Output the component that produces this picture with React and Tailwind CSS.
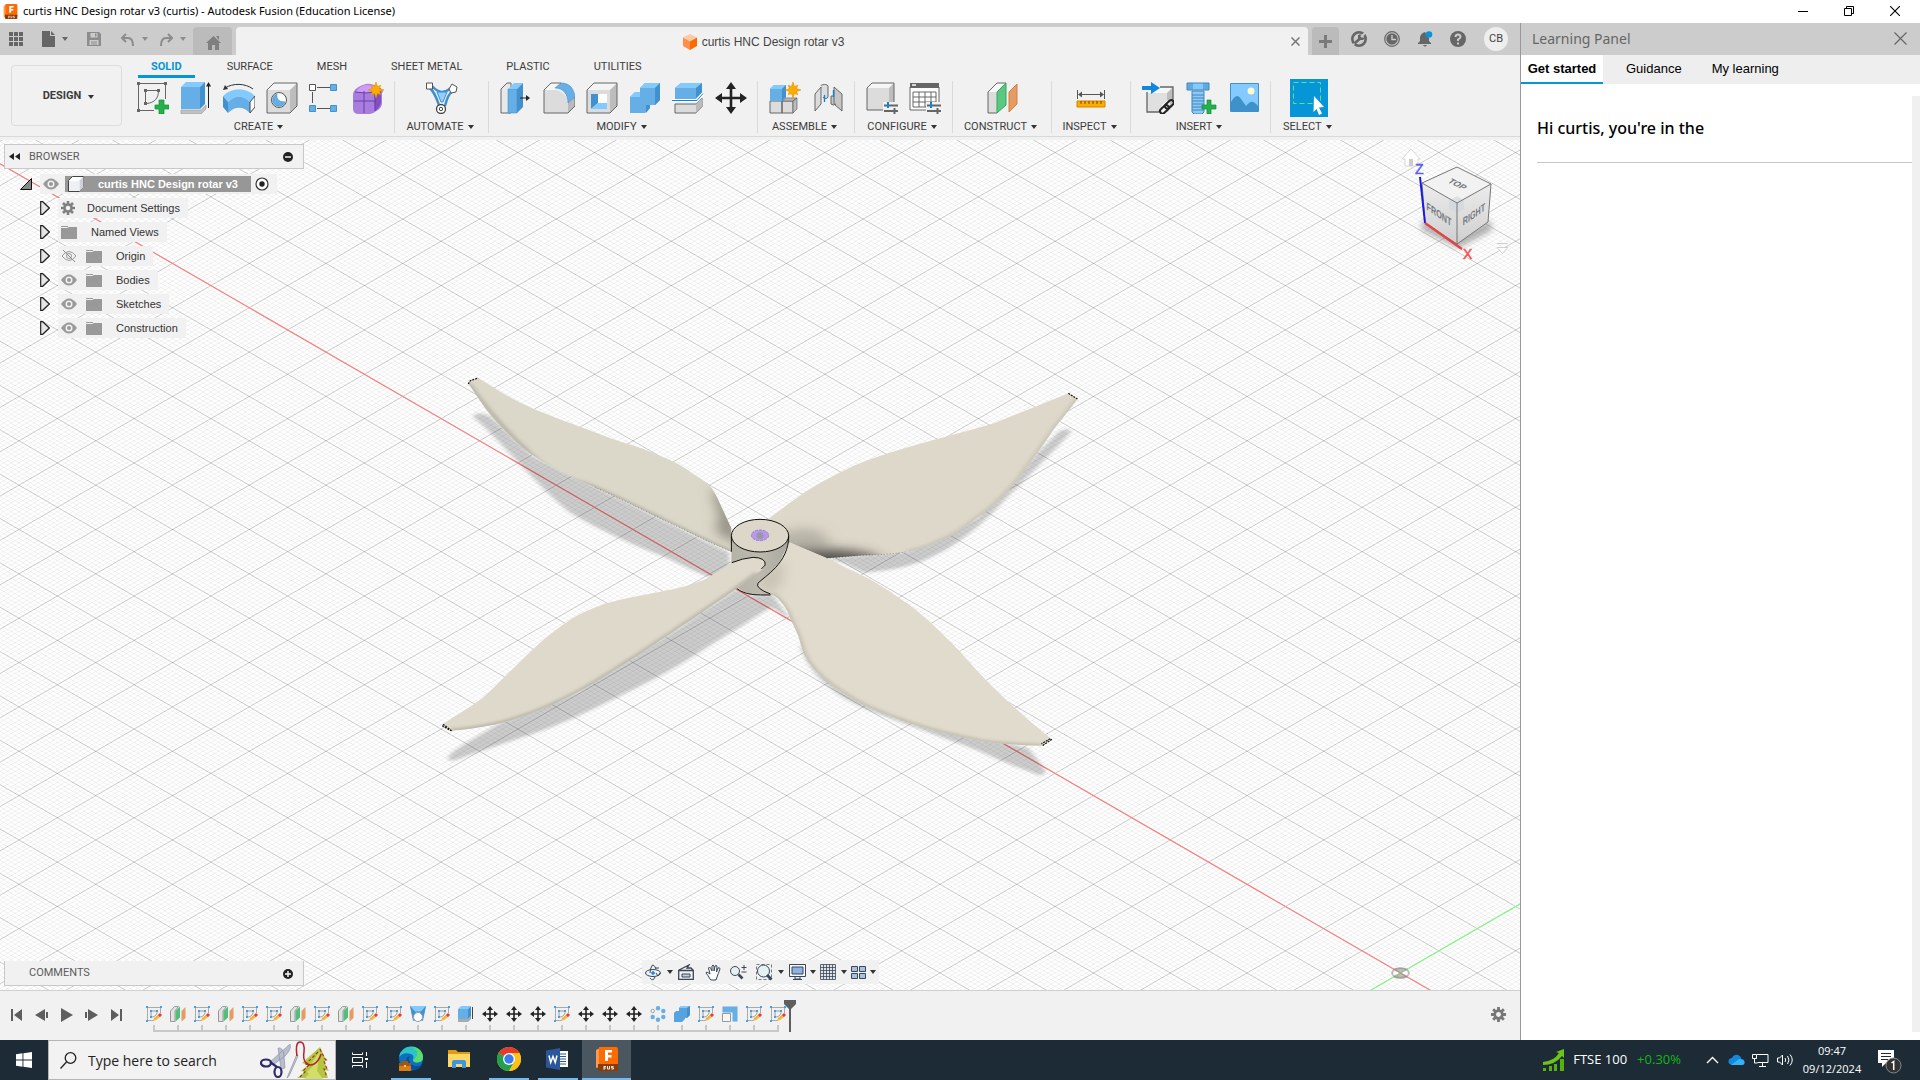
import React from "react";

/* ---------- small shared pieces ---------- */

const Caret = ({ className = "text-[#333]" }) => (
  <svg width="6" height="4" viewBox="0 0 6 4" className={className} aria-hidden="true">
    <path d="M0 0h6L3 4z" fill="currentColor" />
  </svg>
);

const Svg = ({ size = 32, box = 32, children }) => (
  <svg width={size} height={size} viewBox={`0 0 ${box} ${box}`} className="shrink-0" aria-hidden="true" fill="none">
    {children}
  </svg>
);

const B = "#66aee6";
const BL = "#82caff";
const BD = "#4391cc";
const G = "#666";
const burst = (x, y, r) => {
  const pts = [];
  for (let i = 0; i < 16; i++) {
    const a = (Math.PI * i) / 8;
    const q = i % 2 ? r * 0.48 : i % 4 ? r * 0.85 : r;
    pts.push(`${(x + q * Math.cos(a)).toFixed(2)},${(y + q * Math.sin(a)).toFixed(2)}`);
  }
  return pts.join(" ");
};

const ribbonIcons = {
  sketch: (
    <>
      <path d="M3 1.500h24M1.500 3v24M28.500 3v14M3 28.500h14M8.500 9v13M9 8.500h12M21.500 9c0 7-4 12-12 12.500" stroke={G} />
      <path d="M0 0h3v3H0zM27 0h3v3h-3zM0 27h3v3H0zM7 7h3v3H7zM20 7h3v3h-3zM7 20h3v3H7z" fill={G} />
      <path d="M22 18h5v5h5v4h-5v5h-5v-5h-4v-4h4z" fill="#22b14c" stroke="#178a38" strokeWidth=".7" />
    </>
  ),
  extrude: (
    <>
      <path d="M1 28h20l5-5v4l-5 5H1z" fill="#c2c2c2" stroke="#999" strokeWidth=".6" />
      <path d="M1 5v22h19V5z" fill={B} />
      <path d="M1 5l5-5h19l-5 5z" fill={BL} />
      <path d="M20 5l5-5v22l-5 5z" fill={BD} />
      <path d="M28.500 3v23" stroke="#222" />
      <path d="M28.500 0l2.500 4.500h-5z" fill="#222" />
    </>
  ),
  revolve: (
    <>
      <path d="M2 6c8-5 20-5 28 1" stroke="#333" />
      <path d="M0 8l2-5 3 4z" fill="#333" />
      <path d="M0 14C9 5 23 5 32 14l-5 6C20 13 12 13 5 20z" fill={BL} />
      <path d="M0 14l5 6v11l-5-6z" fill={BD} />
      <path d="M5 20c7-7 15-7 22 0v11c-7-7-15-7-22 0z" fill={B} />
      <path d="M27 20l5-6v11l-5 6z" fill="#fff" stroke="#444" />
    </>
  ),
  hole: (
    <>
      <path d="M1 8l7-7h23v23l-7 7" fill="#bdbdbd" />
      <path d="M1 8l7-7h23l-7 7z" fill="#f4f4f4" />
      <path d="M1 8h23v23H1z" fill="#dcdcdc" />
      <path d="M1 8l7-7h23v23l-7 7H1z" stroke={G} />
      <circle cx="13" cy="18" r="7.500" fill="#fff" stroke="#555" />
      <path d="M11 12a6.300 6.300 0 1 0 8 8C13 20 10 17 11 12z" fill={B} stroke={BD} strokeWidth=".7" />
    </>
  ),
  pattern: (
    <>
      <path d="M8 5.500h13M3.500 10v11M8 26.500h13" stroke="#555" />
      <path d="M.5 2.500h6v6h-6z" fill="#fff" stroke="#555" />
      <path d="M21.500 2.500h6v6h-6zM.5 23.500h6v6h-6zM21.500 23.500h6v6h-6z" fill={B} stroke={BD} />
    </>
  ),
  form: (
    <>
      <path d="M1 13Q1 9 5 6t9-4 12 3 4 6v10q0 4-4 7t-8 4H7q-6 0-6-5z" fill="#a77ee0" />
      <path d="M4 10Q8 3 15 3q9 0 12 3-6 5-10 5z" fill="#cf9cf5" />
      <path d="M22 10q6-4 7-4v15q-2 6-6 8z" fill="#8250bd" />
      <path d="M2 19h22M12 9v22M3 10q10 2 20 0v19" stroke="#6b3fa8" />
      <polygon points={burst(24, 8, 8)} fill="#ffab00" stroke="#d98b00" strokeWidth=".5" />
    </>
  ),
  automate: (
    <>
      <path d="M4 6c5 5 6 9 9 17M28 8c-6 4-7 9-9 16M6 4c7 8 13 7 19 2" stroke="#3f8ed0" strokeWidth="2.500" />
      <path d="M11 10h10l-4 10h-2z" fill="#8fd0ff" stroke="#3f8ed0" />
      <path d="M.5 1h6v6h-6z" fill="#fff" stroke="#555" />
      <path d="M23 7l3-5 5 3-1 5-5 1z" fill="#fff" stroke="#555" />
      <circle cx="15" cy="27" r="4.500" fill="#fff" stroke="#444" strokeWidth="1.300" />
      <circle cx="15" cy="27" r="1.700" stroke="#444" />
    </>
  ),
  presspull: (
    <>
      <path d="M1 7l6-6h4v30H1z" fill="#e8e8e8" stroke={G} />
      <path d="M8 7v24h9V7z" fill={B} stroke={BD} strokeWidth=".6" />
      <path d="M8 7l6-6h9l-6 6z" fill={BL} />
      <path d="M17 7l6-6v24l-6 6z" fill={BD} />
      <path d="M20 16h8" stroke="#222" />
      <path d="M26 13l4 3-4 3z" fill="#222" />
    </>
  ),
  fillet: (
    <>
      <path d="M1 8l7-7h12L12 8z" fill="#f6f6f6" />
      <path d="M1 8h10c9 0 14 7 14 15v8H1z" fill="#dcdcdc" />
      <path d="M25 21l7-6v9l-7 7z" fill="#bbb" />
      <path d="M12 6l6-5c9 0 13 6 14 14l-7 6C25 12 20 6 12 6z" fill={B} stroke={BD} strokeWidth=".6" />
      <path d="M18 1H8L1 8v23h24l7-7v-9" stroke={G} />
    </>
  ),
  shell: (
    <>
      <path d="M1 8l7-7h23v23l-7 7" fill="#bdbdbd" />
      <path d="M1 8l7-7h23l-7 7z" fill="#f4f4f4" />
      <path d="M1 8h23v23H1z" fill="#dcdcdc" />
      <path d="M1 8l7-7h23v23l-7 7H1z" stroke={G} />
      <path d="M5 12h16v15H5z" fill="#fff" />
      <path d="M5 12h7v9l-7 6z" fill={BD} />
      <path d="M5 27l7-6h9v6z" fill={BL} />
    </>
  ),
  combine: (
    <>
      <path d="M1 15l5-5h5V6l5-5h15v17l-5 5h-5v3l-5 5H1z" fill={B} />
      <path d="M11 6l5-5h15l-5 5zM1 15l5-5h5v5z" fill={BL} />
      <path d="M26 6l5-5v17l-5 5zM17 23h4v3l-4 5z" fill={BD} />
    </>
  ),
  split: (
    <>
      <path d="M3 6l6-5h21v10l-6 6H3z" fill={B} />
      <path d="M3 6l6-5h21l-6 5z" fill={BL} />
      <path d="M24 6l6-5v10l-6 5z" fill={BD} />
      <path d="M3 22h21l6-6v9l-6 6H3z" fill="#dcdcdc" stroke={G} />
      <path d="M24 22l6-6v9l-6 6z" fill="#bbb" />
      <path d="M0 18.500h25l6-7" stroke="#fff" strokeWidth="3" />
      <path d="M0 18.500h25l6-7" stroke="#0a84e0" />
    </>
  ),
  move: (
    <>
      <path d="M16 5v22M5 16h22" stroke="#222" strokeWidth="2.600" />
      <path d="M16 0l5 7H11zM16 32l5-7H11zM0 16l7-5v10zM32 16l-7-5v10z" fill="#222" />
    </>
  ),
  component: (
    <>
      <path d="M1 19h12v12H1zM13 19h11v12H13z" fill="#dcdcdc" stroke={G} />
      <path d="M13 19l4-3h11l-4 3zM24 19l4-3v11l-4 4z" fill="#bbb" stroke={G} strokeWidth=".7" />
      <path d="M1 7l4-4h12v12l-4 4H1z" fill={B} />
      <path d="M1 7l4-4h12l-4 4z" fill={BL} />
      <path d="M13 7l4-4v12l-4 4z" fill={BD} />
      <polygon points={burst(24, 8, 8)} fill="#ffab00" stroke="#d98b00" strokeWidth=".5" />
    </>
  ),
  joint: (
    <>
      <path d="M3 12l6-7v17l-6 7zM9 4c0-2 7-2 7 0v11c0 2-5 2-5 0" fill="#dcdcdc" stroke={G} />
      <path d="M30 12l-8-7v17l8 7zM22 14h-3v8q2 2 5 0" fill="#c6c6c6" stroke={G} />
      <path d="M12.500 13v7M21.500 8v7" stroke="#0a84e0" strokeWidth="1.400" />
    </>
  ),
  configure: (
    <>
      <path d="M1 6l5-5h22v22l-5 5" fill="#bdbdbd" />
      <path d="M1 6h22v22H1z" fill="#dcdcdc" />
      <path d="M1 6l5-5h22l-5 5z" fill="#f6f6f6" />
      <path d="M28 20V1H6L1 6v22h17" stroke={G} />
      <path d="M17 20h15v12H17z" fill="#f1f1f1" />
      <path d="M18 23.500h14M18 29h14" stroke={G} strokeWidth="2" />
      <path d="M22 20v6" stroke="#0a84e0" strokeWidth="2" />
      <path d="M28.500 26v6" stroke={G} strokeWidth="2" />
    </>
  ),
  table: (
    <>
      <path d="M1 5h29v23H1z" fill="#fff" stroke={G} />
      <path d="M1 1h29v5H1z" fill="#666" />
      <path d="M3 3h4" stroke="#fff" strokeWidth="1.500" />
      <path d="M4 10h23v15H4zM4 15h23M4 20h23M10 10v15M16 10v15M22 10v15" stroke={G} />
      <path d="M17 20h15v12H17z" fill="#f1f1f1" />
      <path d="M18 23.500h14M18 29h14" stroke={G} strokeWidth="2" />
      <path d="M22 20v6" stroke="#0a84e0" strokeWidth="2" />
      <path d="M28.500 26v6" stroke={G} strokeWidth="2" />
    </>
  ),
  plane: (
    <>
      <path d="M2 10l9-9h9l-9 9v21H2z" fill="#dcdcdc" />
      <path d="M2 10l9-9h9l-9 9z" fill="#f8f8f8" />
      <path d="M20 1h-9L2 10v21h9" stroke={G} />
      <path d="M11 10l9-9v22l-9 8z" fill="#5bc882" stroke="#2fa85c" />
      <path d="M23 10l8-8v20l-8 8z" fill="#e69a64" stroke="#d07f45" />
    </>
  ),
  measure: (
    <>
      <path d="M2.500 8v9M29.500 8v9M4 12.500h24" stroke="#555" />
      <path d="M3 12.500l4-3v6zM29 12.500l-4-3v6z" fill="#555" />
      <path d="M2 19h28v6H2z" fill="#ffab00" stroke="#cf8600" />
      <path d="M6 19v3M10 19v3M14 19v3M18 19v3M22 19v3M26 19v3" stroke="#6b4a00" />
    </>
  ),
  insert: (
    <>
      <path d="M5 11l5-6h21v19l-6 6" fill="#bdbdbd" />
      <path d="M5 11h20v19H5z" fill="#e0e0e0" />
      <path d="M5 11l5-6h21l-6 6z" fill="#f6f6f6" />
      <path d="M18 5h13v13M5 10v20h12" stroke={G} strokeWidth="1.300" />
      <path d="M0 4h9V0l9 6-9 6V8H0z" fill="#1187e0" />
      <g stroke="#f1f1f1" strokeWidth="5"><path d="M21 25l6-5M20 29l6-5" /></g>
      <g stroke="#222" strokeWidth="2">
        <rect x="22" y="20" width="10" height="5" rx="2.500" transform="rotate(-42 27 22)" />
        <rect x="17" y="25" width="10" height="5" rx="2.500" transform="rotate(-42 22 27)" />
      </g>
    </>
  ),
  fastener: (
    <>
      <path d="M2 1h22v7H2z" fill="#64a9dc" />
      <path d="M8 1h10v7H8z" fill="#82caff" />
      <path d="M2 1h22v7H2z" stroke="#3f86bf" />
      <path d="M7 9h12v21l-2 2H9l-2-2z" fill="#8cc8f2" stroke="#3f86bf" />
      <path d="M7 13h12M7 16h12M7 19h12M7 22h12M7 25h12M7 28h12" stroke="#3f86bf" />
      <path d="M22 18h4v5h5v4h-5v5h-4v-5h-5v-4h5z" fill="#22b14c" stroke="#178a38" strokeWidth=".7" />
    </>
  ),
  canvas: (
    <>
      <path d="M2.500 1.500h28v28h-28z" fill="#82caff" stroke={BD} />
      <circle cx="23" cy="9" r="3.500" fill="#fff8c8" />
      <path d="M3 20c4-7 7-8 10-3l5 7c4-4 6-7 12 0v5H3z" fill="#3f91ca" />
    </>
  ),
};

const small = {
  sketch: (
    <>
      <path d="M1.500 15V1.500H15M14.500 1v6M1 14.500h7" stroke="#aaa" />
      <path d="M5 11V5h6M11 5c0 4-2 6-6 6" stroke="#999" />
      <path d="M0 0h2v2H0zM14 0h2v2h-2zM0 14h2v2H0zM4 4h2v2H4zM10 4h2v2h-2zM4 10h2v2H4z" fill="#3fa2ea" />
      <path d="M7 15l1-3 5-4 2 2-5 4z" fill="#f3b53c" />
      <path d="M12 9l2-2 2 2-2 2z" fill="#e83b3b" />
    </>
  ),
  plane: (
    <>
      <path d="M.5 5l4-4.500h4L5 5v10.500H.5z" fill="#e2e2e2" stroke="#999" />
      <path d="M5.500 5L10 .5v11l-4.500 4z" fill="#4fc07b" />
      <path d="M11.500 5l4-4v11l-4 3.500z" fill="#e69a64" />
    </>
  ),
  loft: (
    <>
      <path d="M0 0h16l-3 15H3z" fill={B} />
      <path d="M0 0h16l-5 5H5z" fill={BL} />
      <path d="M0 0l3 13 3-6zM16 0l-3 13-3-6z" fill={BD} />
      <circle cx="8" cy="11" r="4.500" fill="#fff" stroke="#999" />
    </>
  ),
  extrude: (
    <>
      <path d="M0 13h10l3-3v3l-3 3H0z" fill="#aaa" />
      <path d="M0 3h10v10H0z" fill={B} />
      <path d="M0 3l3-3h10l-3 3z" fill={BL} />
      <path d="M10 3l3-3v10l-3 3z" fill={BD} />
      <path d="M14.500 1v12" stroke="#444" />
    </>
  ),
  move: (
    <>
      <path d="M8 2v12M2 8h12" stroke="#222" strokeWidth="1.600" />
      <path d="M8 0l3 4H5zM8 16l3-4H5zM0 8l4-3v6zM16 8l-4-3v6z" fill="#222" />
    </>
  ),
  circular: (
    <>
      <circle cx="8" cy="2.200" r="2.200" fill={B} />
      <circle cx="13.300" cy="5" r="2.200" fill={B} />
      <circle cx="13.300" cy="11" r="2.200" fill={B} />
      <circle cx="8" cy="13.800" r="2.200" fill={B} />
      <circle cx="2.700" cy="11" r="2.200" fill={B} />
      <circle cx="2.700" cy="5" r="1.700" fill="#fff" stroke="#999" />
    </>
  ),
  combine: (
    <>
      <path d="M0 7l2-2h3V2l2-2h9v9l-3 3h-2v1l-3 3H0z" fill="#56a3df" />
      <path d="M5 2l2-2h9l-3 2z" fill={BL} />
      <path d="M13 2l3-2v9l-3 3z" fill={BD} />
    </>
  ),
  scale: (
    <>
      <path d="M.5.500h15v15h-5v-9h-10z" fill={B} />
      <path d="M.5 7.500h8v8h-8z" fill="#f6f6f6" stroke="#999" />
    </>
  ),
};

/* ---------- title bar ---------- */

const FusionLogo = ({ size }) => (
  <svg width={size} height={size} viewBox="0 0 24 24" aria-hidden="true">
    <path d="M1 3l4-2v18l-3 2q-1 0-1-1z" fill="#ff9a55" />
    <path d="M4 0h17q2 0 2 2v17H4z" fill="#ff6b00" />
    <path d="M3 17h20v5q0 2-2 2H5q-2 0-2-2z" fill="#8c3a06" />
    <path d="M10 3h7v2.500h-4V8h3.500v2.500H13V14h-3z" fill="#fff" />
    <path d="M9 19v4M9 19.500h2M9 21h2M12.500 19v3h2v-3M18.500 19.500h-2v1.300h2V22h-2" stroke="#fff" strokeWidth=".9" fill="none" />
  </svg>
);

function TitleBar() {
  return (
    <header className="flex h-[23px] shrink-0 items-center bg-white pl-[3px]">
      <FusionLogo size={15} />
      <h1 className="ml-[5px] flex-1 font-['Noto_Sans',sans-serif] text-[11px] text-black">
        curtis HNC Design rotar v3 (curtis) - Autodesk Fusion (Education License)
      </h1>
      <div className="flex h-full pr-[2px] text-black">
        <button aria-label="Minimise" className="flex w-[46px] items-center justify-center">
          <svg width="10" height="10" viewBox="0 0 10 10"><path d="M0 4.500h10" stroke="currentColor" /></svg>
        </button>
        <button aria-label="Restore" className="flex w-[46px] items-center justify-center pb-[2px]">
          <svg width="10" height="10" viewBox="0 0 10 10" fill="none"><path d="M.5 2.500h7v7h-7zM2.500 2.500v-2h7v7h-2" stroke="currentColor" /></svg>
        </button>
        <button aria-label="Close" className="flex w-[46px] items-center justify-center pb-[2px]">
          <svg width="10" height="10" viewBox="0 0 10 10"><path d="M0 0l10 10M10 0L0 10" stroke="currentColor" strokeWidth="1.100" /></svg>
        </button>
      </div>
    </header>
  );
}

/* ---------- quick access bar ---------- */

function QuickBar() {
  return (
    <div className="flex h-8 items-end bg-[#cccccc] text-[#666]">
      <div className="flex h-8 w-[193px] items-center pl-[9px]">
        <button aria-label="Data panel" className="w-[33px]">
          <svg width="14" height="14" viewBox="0 0 14 14" fill="currentColor">
            {[0, 5, 10].map((y) => [0, 5, 10].map((x) => <rect key={`${x}-${y}`} x={x} y={y} width="4" height="4" />))}
          </svg>
        </button>
        <button aria-label="File" className="flex w-[45px] items-center gap-[6px]">
          <svg width="14" height="16" viewBox="0 0 14 16" fill="currentColor"><path d="M0 0h8v5h5v11H0zM9 0l4 4H9z" /></svg>
          <Caret className="text-[#666]" />
        </button>
        <button aria-label="Save" className="w-[34px] text-[#8c8c8c]">
          <svg width="14" height="14" viewBox="0 0 14 14"><path d="M0 0h12l2 2v12H0z" fill="currentColor" /><path d="M3.500 1h7v4.500h-7zM2.500 8h9v5h-9z" fill="#ccc" /><path d="M8 1.500h1.500v3H8zM4 9.500h6v1H4zM4 11.500h6v1H4z" fill="currentColor" /></svg>
        </button>
        <button aria-label="Undo" className="flex w-[39px] items-center gap-2 text-[#8c8c8c]">
          <svg width="13" height="13" viewBox="0 0 13 13" fill="none" stroke="currentColor" strokeWidth="2"><path d="M5 1L1 5l4 4M1.500 5H7q5 0 5 8" /></svg>
          <Caret className="text-[#8c8c8c]" />
        </button>
        <button aria-label="Redo" className="flex items-center gap-[7px] text-[#8c8c8c]">
          <svg width="13" height="13" viewBox="0 0 13 13" fill="none" stroke="currentColor" strokeWidth="2"><path d="M8 1l4 4-4 4M11.500 5H6Q1 5 1 13" /></svg>
          <Caret className="text-[#8c8c8c]" />
        </button>
      </div>
      <button aria-label="Home" className="flex h-7 w-[39px] items-center justify-center rounded-t bg-[#bbbbbb] pt-1 pl-[2px] text-[#7f7f7f]">
        <svg width="15" height="14" viewBox="0 0 15 14" fill="currentColor"><path d="M7.500 0L15 7h-2v7H9V9H6v5H2V7H0zM10 0h3v4z" /></svg>
      </button>
      <div className="ml-1 flex h-7 flex-1 items-center rounded-t bg-[#f1f1f1] pr-2 font-['Liberation_Sans',sans-serif] text-xs text-[#444]">
        <div className="flex flex-1 items-center justify-center gap-[5px] pt-[2px]">
          <svg width="14" height="16" viewBox="0 0 14 16"><path d="M7 0l7 3.500L7 7.500 0 3.500z" fill="#ffc9a3" /><path d="M0 3.500l7 4V16l-7-4z" fill="#ff8f45" /><path d="M14 3.500l-7 4V16l7-4z" fill="#fb6a00" /></svg>
          <span>curtis HNC Design rotar v3</span>
        </div>
        <button aria-label="Close document" className="text-[#777]">
          <svg width="9" height="9" viewBox="0 0 9 9"><path d="M.5.500l8 8M8.500.500l-8 8" stroke="currentColor" strokeWidth="1.500" /></svg>
        </button>
      </div>
      <button aria-label="New tab" className="ml-1 flex h-7 w-[27px] items-center justify-center rounded-t bg-[#bbbbbb] text-[#7a7a7a]">
        <svg width="13" height="13" viewBox="0 0 13 13"><path d="M6.500 0v13M0 6.500h13" stroke="currentColor" strokeWidth="3" /></svg>
      </button>
      <div className="flex h-8 items-center gap-[17px] pr-3 pl-3">
        <button aria-label="Extensions">
          <svg width="16" height="16" viewBox="0 0 16 16" fill="none"><circle cx="8" cy="8" r="6.700" stroke="currentColor" strokeWidth="2.600" /><path d="M2 14L8 8" stroke="#ccc" strokeWidth="1.500" /><path d="M3.500 12.500L9 7.500" stroke="currentColor" strokeWidth="2.600" /><path d="M7 4v3q0 2 2 2h3l2-2-2.500-.5L10 5l-.5-2z" fill="currentColor" /><path d="M10 6l4-4" stroke="#ccc" strokeWidth="1.800" /></svg>
        </button>
        <button aria-label="Job status">
          <svg width="16" height="16" viewBox="0 0 16 16" fill="none"><circle cx="8" cy="8" r="7.300" stroke="currentColor" strokeWidth="1.200" /><circle cx="8" cy="8" r="5.700" fill="currentColor" /><path d="M8 4v4.500h4" stroke="#ccc" strokeWidth="1.400" /></svg>
        </button>
        <button aria-label="Notifications">
          <svg width="16" height="16" viewBox="0 0 16 16"><path d="M1 12l2-2V6q1-4 5-5l4 6v3l2 2v1H1zM6 14h4q-2 3-4 0z" fill="currentColor" /><circle cx="12" cy="3.500" r="3.300" fill="#0696d7" /></svg>
        </button>
        <button aria-label="Help">
          <svg width="16" height="16" viewBox="0 0 16 16"><circle cx="8" cy="8" r="8" fill="currentColor" /><path d="M5.500 6Q5.500 3.500 8 3.500T10.500 6Q10.500 7 8 8.500V10M8 11.500v2" stroke="#ccc" fill="none" strokeWidth="2" /></svg>
        </button>
        <button className="ml-[1px] flex size-6 items-center justify-center rounded-full bg-[#eeeeee] font-['Roboto',sans-serif] text-[11px] text-[#444]">CB</button>
      </div>
    </div>
  );
}

/* ---------- ribbon ---------- */

const groups = [
  { label: "CREATE", icons: ["sketch", "extrude", "revolve", "hole", "pattern", "form"], w: "w-[269px]" },
  { label: "AUTOMATE", icons: ["automate"], w: "w-[94px]" },
  { label: "MODIFY", icons: ["presspull", "fillet", "shell", "combine", "split", "move"], w: "w-[269px]" },
  { label: "ASSEMBLE", icons: ["component", "joint"], w: "w-[97px]" },
  { label: "CONFIGURE", icons: ["configure", "table"], w: "w-[98px]" },
  { label: "CONSTRUCT", icons: ["plane"], w: "w-[99px]" },
  { label: "INSPECT", icons: ["measure"], w: "w-[79px]" },
  { label: "INSERT", icons: ["insert", "fastener", "canvas"], w: "w-[140px]" },
];

const GroupLabel = ({ children }) => (
  <button className="flex h-3 items-center gap-1 whitespace-nowrap pr-[3px] leading-3">
    {children}
    <Caret />
  </button>
);

function Ribbon() {
  return (
    <div className="flex h-[85px] shrink-0 border-b-[3px] border-[#f1f1f1] bg-[#f1f1f1] font-['Roboto',sans-serif] text-[11px] text-[#3c3c3c]">
      <div className="flex flex-1 border-b border-[#d9d9d9] pb-[2px]">
        <button className="mt-[10px] ml-[11px] flex h-[61px] w-[111px] shrink-0 items-center justify-center gap-[7px] rounded border border-[#dcdcdc] pt-[2px] pl-1 font-bold">
          DESIGN
          <Caret />
        </button>
        <div className="ml-1 flex flex-1 flex-col">
          <nav className="ml-3 flex h-[23px] gap-5">
            {["SOLID", "SURFACE", "MESH", "SHEET METAL", "PLASTIC", "UTILITIES"].map((t, i) => (
              <button
                key={t}
                className={
                  i === 0
                    ? "border-b-[3px] border-[#0696d7] px-[13px] pt-1 font-bold text-[#0696d7]"
                    : "border-b-[3px] border-transparent px-3 pt-1"
                }
              >
                {t}
              </button>
            ))}
          </nav>
          <div className="mt-[3px] flex">
            {groups.map((g) => (
              <div key={g.label} className={`${g.w} flex h-[52px] shrink-0 flex-col items-center justify-between border-r border-[#dadada]`}>
                <div className="mt-[1px] flex gap-[11px]">
                  {g.icons.map((n) => (
                    <button key={n} aria-label={n}>
                      <Svg>{ribbonIcons[n]}</Svg>
                    </button>
                  ))}
                </div>
                <GroupLabel>{g.label}</GroupLabel>
              </div>
            ))}
            <div className="ml-3 flex h-[52px] flex-col items-center justify-between">
              <button aria-label="Select" className="-mt-[2px] bg-[#0696d7]">
                <svg width="38" height="38" viewBox="0 0 38 38" fill="none">
                  <path d="M3.500 3.500h27v21h-27z" stroke="#5fe08a" strokeDasharray="5 3" />
                  <path d="M24 17l10 11-5 .5 3 6-3 1.500-2.500-6-3 3z" fill="#fff" />
                </svg>
              </button>
              <GroupLabel>SELECT</GroupLabel>
            </div>
          </div>
        </div>
      </div>
    </div>
  );
}

/* ---------- modelling canvas ---------- */

const CX = 1400.5;
const CY = 833;
const STEP = 44.35;
const SLOPE = 44.35 / 76.75;

function gridPath(step, skipMajor) {
  let d = "";
  const W = 2600;
  const n = Math.ceil(2600 / step);
  for (let k = -n; k <= n; k++) {
    if (skipMajor && k % 10 === 0) continue;
    const y = CY + k * step;
    d += `M0 ${(y - SLOPE * CX).toFixed(2)}L${W} ${(y + SLOPE * (W - CX)).toFixed(2)}`;
    d += `M0 ${(y + SLOPE * CX).toFixed(2)}L${W} ${(y - SLOPE * (W - CX)).toFixed(2)}`;
  }
  return d;
}
const MAJOR = gridPath(STEP, false);
const MINOR = gridPath(STEP / 10, true);

const blades = {
  nw: "M88 100L93 92 111 84C150 115 190 150 240 177C310 215 360 235 410 262C450 280 485 292 520 312C555 330 580 345 600 365C625 385 642 400 650 415C660 435 665 450 670 465L695 535V605C640 575 600 548 550 517C490 480 430 440 380 412C320 378 270 345 230 310C190 270 155 220 130 180Z",
  ne: "M780 508C800 487 825 462 850 440C872 420 895 402 920 385C945 367 970 350 1000 335C1040 315 1080 300 1120 285C1180 262 1240 245 1300 220L1472 130 1493 147C1475 180 1458 205 1440 235C1420 275 1400 310 1380 345C1360 385 1340 415 1320 440C1300 467 1280 488 1260 505C1235 532 1210 555 1180 570C1155 587 1130 600 1100 605C1065 613 1035 614 1000 616L915 625 828 577Z",
  se: "M828 577L920 627C950 648 985 668 1010 685C1045 710 1070 733 1100 760C1130 788 1155 818 1180 850C1210 888 1235 922 1260 960C1310 1030 1370 1100 1434 1168L1412 1187C1370 1186 1325 1183 1280 1175C1225 1162 1170 1145 1120 1125C1078 1107 1035 1085 1000 1065C970 1045 945 1022 920 1000C900 978 882 955 870 930C860 908 855 885 850 860C844 840 838 825 832 810C828 792 822 778 815 765C806 748 797 738 785 732C765 722 752 715 756 703C765 690 790 665 808 630Z",
  sw: "M696 638C715 628 730 623 745 622C765 622 775 634 773 645Q772 654 755 670L705 717C655 765 605 805 560 847C525 875 495 905 460 932C420 965 380 1000 340 1027C295 1058 250 1085 200 1105C155 1125 100 1137 50 1142L30 1123C60 1095 92 1073 120 1045C148 1015 172 978 200 945C228 910 252 878 280 850C303 828 325 805 350 790C373 774 395 764 420 755C460 742 505 732 550 720C585 712 620 697 640 684Z",
};

const shadows = [
  "M100 200C105 185 120 188 140 200L240 320 690 608V690C640 690 600 655 540 620C460 580 390 540 320 485C240 400 170 280 100 200Z",
  "M42 1225C45 1205 90 1175 160 1120L340 1025 560 845 705 717 790 770C760 790 720 830 690 850C640 890 580 945 520 985C450 1030 400 1065 320 1110C240 1155 140 1190 60 1230Q40 1235 42 1225Z",
  "M955 640L915 625 1100 605 1260 505 1400 310 1450 245Q1477 230 1478 246C1440 300 1390 365 1340 430C1290 500 1230 580 1150 625C1100 655 1040 665 1000 668Z",
  "M850 880C880 990 940 1040 1010 1080C1090 1120 1180 1160 1270 1205C1320 1235 1370 1260 1405 1276Q1425 1275 1416 1255L1380 1195 1120 1120 950 1020Z",
  "M705 717L735 737 790 735 835 815C815 800 800 775 780 770Z",
];

function Scene() {
  return (
    <svg className="absolute inset-0 h-full w-full" aria-label="Model view" role="img">
      <defs>
        <filter id="soft" x="-10%" y="-10%" width="120%" height="120%"><feGaussianBlur stdDeviation="5" /></filter>
        <filter id="shade" x="-60%" y="-60%" width="220%" height="220%"><feGaussianBlur stdDeviation="16" /></filter>
        {Object.entries(blades).map(([k, d]) => (
          <clipPath key={k} id={`clip-${k}`}><path d={d} /></clipPath>
        ))}
        <linearGradient id="hub" x1="0" x2="1"><stop offset="0" stopColor="#b5b2a7" /><stop offset=".5" stopColor="#bdb9ae" /><stop offset="1" stopColor="#a9a69b" /></linearGradient>
      </defs>
      <rect width="100%" height="100%" fill="#ffffff" />
      <path d={MINOR} stroke="#000" strokeOpacity=".055" strokeWidth="1" />
      <path d={MAJOR} stroke="#000" strokeOpacity=".2" strokeWidth="1" />
      <path d={`M0 ${CY - SLOPE * CX}L2600 ${CY + SLOPE * (2600 - CX)}`} stroke="#ff7f7f" strokeWidth="1.200" />
      <path d={`M${CX - 400} ${CY + SLOPE * 400}L2600 ${CY - SLOPE * (2600 - CX)}`} stroke="#86f786" strokeWidth="1.200" />
      <g fill="#8a8a8a" fillOpacity=".55">
        <ellipse cx="1400.500" cy="833" rx="8.500" ry="4.800" fill="none" stroke="#8a8a8a" strokeOpacity=".55" strokeWidth="1.800" />
        <path d="M1393 829q7-3 15 0l-7 4 7 4q-7 3-15 0l7-4z" />
      </g>
      <g transform="translate(430 210) scale(.43367 .33333)">
        <g fill="#000" fillOpacity=".2" filter="url(#soft)">
          <path d={shadows.join("")} />
        </g>
        {/* upper blades */}
        <path d={blades.nw} fill="#dcd8c9" />
        <g clipPath="url(#clip-nw)">
          <path d="M690 440L650 410 668 500 660 545 720 590Z" fill="#7d7b71" fillOpacity=".8" filter="url(#shade)" />
          <path d="M88 100C110 140 155 220 230 310S320 378 380 412 490 480 550 517 640 575 700 608" stroke="#8b897e" strokeWidth="9" strokeOpacity=".55" fill="none" filter="url(#soft)" />
        </g>
        <path d={blades.ne} fill="#ded8ca" />
        <g clipPath="url(#clip-ne)">
          <path d="M1493 147C1475 180 1458 205 1440 235C1420 275 1400 310 1380 345C1360 385 1340 415 1320 440C1300 467 1280 488 1260 505C1235 532 1210 555 1180 570C1155 587 1130 600 1100 605" stroke="#b3af9f" strokeWidth="12" fill="none" strokeOpacity=".5" filter="url(#soft)" />
          <ellipse cx="900" cy="636" rx="140" ry="40" fill="#3e3d3a" fillOpacity=".85" filter="url(#shade)" />
          <ellipse cx="860" cy="575" rx="60" ry="40" fill="#8a887e" fillOpacity=".45" filter="url(#shade)" />
        </g>
        {/* hub */}
        <path d="M695 557V690Q715 735 762 735H790L830 600V557Z" fill="url(#hub)" />
        <path d="M707 715Q725 735 762 735H785" fill="none" stroke="#111" strokeWidth="1" vectorEffect="non-scaling-stroke" />
        <ellipse cx="761" cy="557" rx="66" ry="49" fill="#dcd7c9" stroke="#111" strokeWidth="1" vectorEffect="non-scaling-stroke" />
        <ellipse cx="761" cy="556" rx="20" ry="16" fill="#b698ec" stroke="#9a80d0" strokeWidth="1" strokeDasharray="3 1" vectorEffect="non-scaling-stroke" />
        <ellipse cx="761" cy="557" rx="8" ry="10" fill="#9b96a4" />
        {/* lower blades */}
        <path d={blades.se} fill="#e0dbcc" />
        <g clipPath="url(#clip-se)">
          <path d="M1412 1187C1370 1186 1325 1183 1280 1175C1225 1162 1170 1145 1120 1125C1078 1107 1035 1085 1000 1065C970 1045 945 1022 920 1000C900 978 882 955 870 930C860 908 855 885 850 860C844 840 838 825 832 810C828 792 822 778 815 765C806 748 797 738 785 732" stroke="#a8a494" strokeWidth="11" strokeOpacity=".55" fill="none" filter="url(#soft)" />
          <path d="M790 640L750 700 780 740 810 700 820 640Z" fill="#b7b3a5" fillOpacity=".6" filter="url(#shade)" />
        </g>
        <path d={blades.sw} fill="#ded9cb" />
        <g clipPath="url(#clip-sw)">
          <path d="M755 670L705 717C655 765 605 805 560 847C525 875 495 905 460 932C420 965 380 1000 340 1027C295 1058 250 1085 200 1105C155 1125 100 1137 50 1142" stroke="#9f9c8e" strokeWidth="12" strokeOpacity=".6" fill="none" filter="url(#soft)" />
        </g>
        <g fill="none" stroke="#111" strokeWidth="1">
          <path vectorEffect="non-scaling-stroke" d="M695 557V605M827 557C828 640 770 680 756 700Q750 715 785 732" />
          <path vectorEffect="non-scaling-stroke" d="M696 638Q720 625 745 622Q775 623 773 645L764 657" />
          <path vectorEffect="non-scaling-stroke" strokeWidth="1.200" strokeDasharray="2 1" d="M88 102L93 92 111 84M1472 130L1493 147M1434 1168L1412 1187M1430 1166L1410 1181M30 1123L50 1142M28 1127L48 1142" />
          <path vectorEffect="non-scaling-stroke" strokeOpacity=".35" strokeDasharray="1 2" d="M380 412C430 440 490 480 550 517S640 575 695 605M915 625L1000 616Q1060 614 1100 605" />
        </g>
      </g>
    </svg>
  );
}

function ViewCube() {
  return (
    <svg className="absolute top-0 right-0 font-['Liberation_Sans',sans-serif]" width="140" height="125" viewBox="0 0 140 125" aria-label="View cube" role="img">
      <defs>
        <filter id="cubeShadow"><feGaussianBlur stdDeviation="3" /></filter>
        <linearGradient id="face" x1="0" y1="0" x2="0" y2="1"><stop offset="0" stopColor="#ececec" /><stop offset="1" stopColor="#cfcfcf" /></linearGradient>
      </defs>
      <path d="M42 80L77 98 110 80 112 90 78 108 42 90z" fill="#777" fillOpacity=".6" filter="url(#cubeShadow)" />
      <path d="M22 19l9-10 9 10h-2v7H25v-7z" fill="#fff" stroke="#d8d8d8" />
      <path d="M29 19h4v7h-4z" fill="#ccc" />
      <path d="M42 43l35-16 34 17-34 19z" fill="#f2f2f2" />
      <path d="M42 43l35 20v41L45 83z" fill="url(#face)" />
      <path d="M111 44L77 63v41l31-22z" fill="url(#face)" />
      <path d="M69 61l8-5 7 4v9l-7 4-8-4z" fill="#cfd6dd" fillOpacity=".6" />
      <path d="M42 43l35-16 34 17-34 19zM42 43l3 40 32 21 31-22 3-38M77 63v41" fill="none" stroke="#777" strokeWidth="1" strokeLinejoin="round" />
      <path d="M40 37l5 46" stroke="#1818e8" strokeWidth="2" />
      <path d="M45 83l37 26" stroke="#e34545" strokeWidth="2.500" />
      <g fontWeight="bold" fill="#74787d" textAnchor="middle">
        <text transform="matrix(.87 .45 -.8 .6 75 46)" fontSize="9">TOP</text>
        <text transform="matrix(.72 .5 0 1.1 59 78)" fontSize="10">FRONT</text>
        <text transform="matrix(.72 -.5 0 1.1 94 78)" fontSize="10">RIGHT</text>
      </g>
      <text x="35" y="34" fontSize="14" fill="#5c5cf5" stroke="#5c5cf5" strokeWidth=".5">Z</text>
      <text x="83" y="119" fontSize="14" fill="#f25555" stroke="#f25555" strokeWidth=".5">X</text>
      <path d="M117 103.500h11M117 107.500h11l-5.500 6z" fill="#fff" stroke="#d0d0d0" />
    </svg>
  );
}

/* ---------- browser tree ---------- */

const Eye = ({ off }) => (
  <svg width="16" height="12" viewBox="0 0 16 12" fill="none" className="shrink-0" aria-hidden="true">
    {off ? (
      <>
        <path d="M1 6q7-9 14 0-7 9-14 0z" stroke="#999" />
        <circle cx="8" cy="6" r="2.500" stroke="#999" />
        <path d="M2 0l12 12" stroke="#888" />
      </>
    ) : (
      <>
        <path d="M0 6q8-11 16 0-8 11-16 0z" fill="#999" />
        <circle cx="8" cy="6" r="3.500" fill="#f1f1f1" />
        <circle cx="8" cy="6" r="2" fill="#999" />
      </>
    )}
  </svg>
);

const Folder = () => (
  <svg width="16" height="13" viewBox="0 0 16 13" className="shrink-0" aria-hidden="true"><path d="M0 0h7v1H0zM0 2h6l2-1h8v12H0z" fill="#999" /></svg>
);

const Gear = ({ size = 14, color = "#808080" }) => (
  <svg width={size} height={size} viewBox="0 0 14 14" className="shrink-0" aria-hidden="true">
    <g stroke={color} strokeWidth="2.600"><path d="M7 0v14M0 7h14M2 2l10 10M12 2L2 12" /></g>
    <circle cx="7" cy="7" r="4.800" fill={color} />
    <circle cx="7" cy="7" r="2.300" fill="#f1f1f1" />
  </svg>
);

const rows = [
  { name: "Document Settings", lead: "gear" },
  { name: "Named Views", lead: "folder" },
  { name: "Origin", lead: "eye", off: true },
  { name: "Bodies", lead: "eye" },
  { name: "Sketches", lead: "eye" },
  { name: "Construction", lead: "eye" },
];

function Browser() {
  return (
    <section className="relative ml-1 w-[300px] text-[#333]">
      <div className="flex h-[25px] items-center border border-[#c8c8c8] bg-[#f1f1f1] pr-[10px] pl-1 font-['Roboto',sans-serif] text-[11px] text-[#5c5c5c]">
        <button aria-label="Collapse browser">
          <svg width="11" height="7" viewBox="0 0 11 7"><path d="M5 0v7L0 3.500zM11 0v7L6 3.500z" fill="#222" /></svg>
        </button>
        <h2 className="ml-[9px] flex-1 pt-[1px]">BROWSER</h2>
        <button aria-label="Minimise browser">
          <svg width="10" height="10" viewBox="0 0 10 10"><circle cx="5" cy="5" r="5" fill="#222" /><path d="M2 5h6" stroke="#fff" strokeWidth="1.400" /></svg>
        </button>
      </div>
      <ul className="mt-[3px] font-['Liberation_Sans',sans-serif] text-[11px]">
        <li className="flex h-6 items-center pl-4">
          <svg width="12" height="12" viewBox="0 0 12 12" className="mr-2"><path d="M11.500.5v11H.5z" fill="#888" stroke="#111" /></svg>
          <div className="flex h-5 items-center bg-[#f1f1f1] pr-[8px] pl-[3px]">
            <Eye />
            <div className="ml-[6px] flex h-4 w-[186px] items-center bg-[#979797] pl-[3px] font-bold text-white">
              <svg width="16" height="16" viewBox="0 0 16 16"><path d="M.5 4.500l4-4h11v11l-4 4H.5z" fill="#fff" stroke="#444" /><path d="M11.500 4.500l4-4v11l-4 4z" fill="#cdd2d8" /><path d="M1 5h10v10H1z" fill="#eef0f3" /></svg>
              <span className="ml-[14px] whitespace-nowrap">curtis HNC Design rotar v3</span>
            </div>
            <svg width="14" height="14" viewBox="0 0 14 14" className="ml-1"><circle cx="7" cy="7" r="6" fill="#fff" stroke="#333" strokeWidth="1.200" /><circle cx="7" cy="7" r="2.700" fill="#222" /></svg>
          </div>
        </li>
        {rows.map((r) => (
          <li key={r.name} className="flex h-6 items-center pl-9">
            <button aria-label={`Expand ${r.name}`} className="mr-2">
              <svg width="10" height="14" viewBox="0 0 10 14"><path d="M.7.700h2L9.300 7l-6.600 6.300h-2z" fill="#e6e6e6" stroke="#222" strokeWidth="1.200" /></svg>
            </button>
            <div className="flex h-5 items-center bg-[#f1f1f1] pr-2 pl-[3px]">
              {r.lead === "gear" && <Gear />}
              {r.lead === "folder" && <Folder />}
              {r.lead === "eye" && (
                <>
                  <Eye off={r.off} />
                  <span className="w-[9px]" />
                  <Folder />
                </>
              )}
              <span className={r.lead === "gear" ? "ml-3" : "ml-[14px]"}>{r.name}</span>
            </div>
          </li>
        ))}
      </ul>
    </section>
  );
}

function NavBar() {
  const K = "#3b4656";
  return (
    <div className="flex h-6 items-center bg-[#f1f1f1] px-[3px]">
      <button aria-label="Orbit" className="flex w-[33px] items-center gap-[5px]">
        <svg width="17" height="17" viewBox="0 0 17 17" fill="none" stroke={K}><ellipse cx="8" cy="9" rx="7.500" ry="3.500" /><path d="M5 14Q8 18 10 13M11 5Q9 0 7 1.500 5 5 5 9" /><path d="M11 9l2 3 2-3" /><path d="M8 7v4M6 9h4" stroke="#1187e0" strokeWidth="1.500" /><path d="M10 4h4" /></svg>
        <Caret />
      </button>
      <button aria-label="Look at" className="w-[27px]">
        <svg width="16" height="16" viewBox="0 0 16 16" fill="none" stroke={K}><path d="M.7 6.500h14.600v9H.7zM1 6l10-5-2 3h4l2 2" strokeWidth="1.300" /><path d="M4 10h8v3H4z" fill="#c8cfda" /></svg>
      </button>
      <button aria-label="Pan" className="w-[25px]">
        <svg width="17" height="17" viewBox="0 0 17 17" fill="#fff" stroke={K}><path d="M5 15Q3 11 1 9q0-2 4 1L3.500 4q1-2 2 0L7 7V2q1-2 2 0v5l1-5q1-1 2 0l-.5 6L13 4q2-1 2 1-2 5-3 8l-1 3H6z" /></svg>
      </button>
      <button aria-label="Zoom" className="w-[26px]">
        <svg width="17" height="16" viewBox="0 0 17 16" fill="none" stroke={K}><circle cx="5" cy="7" r="4.500" fill="#e4f0f4" /><path d="M8.500 10.500l4 4" strokeWidth="2.600" /><path d="M14 1v5M11.500 3.500h5M11.500 8h5" /></svg>
      </button>
      <button aria-label="Fit" className="flex w-[33px] items-center gap-[5px]">
        <svg width="17" height="17" viewBox="0 0 17 17" fill="none" stroke={K}><path d="M.5.500h15v15H.5z" strokeDasharray="3 2" strokeOpacity=".7" /><circle cx="7.500" cy="7" r="6" fill="#e4f2f2" /><path d="M11 11l4.500 4.500" strokeWidth="2.800" /></svg>
        <Caret />
      </button>
      <button aria-label="Display settings" className="flex w-[31px] items-center gap-[4px]">
        <svg width="17" height="16" viewBox="0 0 17 16" fill="none" stroke={K}><path d="M.5.500h16v12H.5z" fill="#f4f6fa" /><path d="M3 3h11v7H3z" fill="#8fb0e4" /><path d="M6 13v2h5v-2M4 15.500h9" /></svg>
        <Caret />
      </button>
      <button aria-label="Grid and snaps" className="flex w-[31px] items-center gap-[5px]">
        <svg width="16" height="16" viewBox="0 0 16 16" fill="#dfe3e8" stroke={K}><path d="M.5.500h15v15H.5zM.5 3.500h15M.5 6.500h15M.5 9.500h15M.5 12.500h15M3.500.500v15M6.500.500v15M9.500.500v15M12.500.500v15" strokeOpacity=".8" /></svg>
        <Caret />
      </button>
      <button aria-label="Viewports" className="flex items-center gap-[4px]">
        <svg width="15" height="13" viewBox="0 0 15 13" fill="#a9c0e4" stroke={K}><path d="M.5.500h6v5h-6zM8.500.500h6v5h-6zM.5 7.500h6v5h-6zM8.500 7.500h6v5h-6z" /></svg>
        <Caret />
      </button>
    </div>
  );
}

/* ---------- timeline ---------- */

const steps =
  "sketch plane sketch plane sketch sketch plane sketch plane sketch sketch loft sketch extrude move move move sketch move move move circular combine sketch scale sketch sketch".split(" ");

function Timeline() {
  const c = "#5e5e5e";
  return (
    <div className="flex h-[50px] shrink-0 items-center border-t border-[#d0d0d0] bg-[#f1f1f1]">
      <div className="flex w-[142px] items-center pb-[2px] pl-[11px]">
        <button aria-label="Go to start" className="w-6"><svg width="12" height="12" viewBox="0 0 12 12" fill={c}><path d="M0 0h2v12H0zM11 0v12L3 6z" /></svg></button>
        <button aria-label="Step back" className="w-[26px]"><svg width="14" height="12" viewBox="0 0 14 12" fill={c}><path d="M10 0v12L0 6zM11 3h2v6h-2z" /></svg></button>
        <button aria-label="Play" className="w-6"><svg width="12" height="14" viewBox="0 0 12 14" fill={c}><path d="M0 0l12 7-12 7z" /></svg></button>
        <button aria-label="Step forward" className="w-[26px]"><svg width="14" height="12" viewBox="0 0 14 12" fill={c}><path d="M3 0v12l10-6zM0 3h2v6H0z" /></svg></button>
        <button aria-label="Go to end"><svg width="12" height="12" viewBox="0 0 12 12" fill={c}><path d="M9 0h2v12H9zM0 0v12l8-6z" /></svg></button>
      </div>
      <div className="mb-2 flex h-[26px] self-end">
        {steps.map((s, i) => (
          <button key={i} aria-label={s} className="flex w-6 flex-col items-center justify-between">
            <Svg size={16} box={16}>{small[s]}</Svg>
            <span
              className={
                i === 0
                  ? "ml-[11px] h-[7px] w-[13px] border-b-2 border-l-2 border-[#c8c8c8]"
                  : i === steps.length - 1
                    ? "mr-[11px] h-[7px] w-[13px] border-r-2 border-b-2 border-[#c8c8c8]"
                    : "flex h-[7px] w-full border-b-2 border-[#c8c8c8]"
              }
            >
              {i > 0 && i < steps.length - 1 && <span className="ml-[11px] w-[2px] bg-[#c8c8c8]" />}
            </span>
          </button>
        ))}
      </div>
      <svg width="12" height="32" viewBox="0 0 12 32" className="mb-2 -ml-[6px] self-end" aria-hidden="true"><path d="M0 0h12v4L7 9v23H5V9L0 4z" fill="#5e5e5e" /></svg>
      <span className="flex-1" />
      <button aria-label="Timeline settings" className="mr-[14px] pb-[2px]"><Gear size={15} color="#777" /></button>
    </div>
  );
}

/* ---------- learning panel ---------- */

function LearningPanel() {
  return (
    <aside className="flex w-[400px] shrink-0 flex-col border-l border-[#999] bg-white">
      <div className="flex h-8 shrink-0 items-center bg-[#cccccc] pr-[13px] pb-[1px] pl-[11px]">
        <h2 className="flex-1 font-['Noto_Sans',sans-serif] text-[14px] text-[#666]">Learning Panel</h2>
        <button aria-label="Close panel">
          <svg width="13" height="13" viewBox="0 0 13 13"><path d="M.5.500l12 12M12.500.500l-12 12" stroke="#666" strokeWidth="1.200" /></svg>
        </button>
      </div>
      <div className="flex h-[29px] shrink-0 bg-[#eeeeee] font-['Liberation_Sans',sans-serif] text-[13px] text-black">
        <button className="w-[82px] border-b-2 border-[#0696d7] bg-white font-bold">Get started</button>
        <button className="ml-[23px] pb-[2px]">Guidance</button>
        <button className="ml-[30px] pb-[2px]">My learning</button>
      </div>
      <div className="flex flex-1 pt-3 pb-2">
        <div className="flex-1 pl-4">
          <h3 className="h-[67px] border-b border-[#c8c8c8] pt-[21px] font-['Noto_Sans',sans-serif] text-[16px] leading-[22px] font-medium text-black">
            Hi curtis, you're in the
          </h3>
        </div>
        <div className="w-2 bg-[#f0f0f0]" />
      </div>
    </aside>
  );
}

/* ---------- taskbar ---------- */

const TaskApp = ({ label, active, open, children }) => (
  <button
    aria-label={label}
    className={active ? "flex h-10 w-[49px] flex-col items-center bg-[#4a5660]" : "flex h-10 w-[49px] flex-col items-center"}
  >
    <span className="flex h-[38px] items-center">{children}</span>
    <span className={active ? "h-[2px] w-full bg-[#76b9ed]" : open ? "h-[2px] w-10 bg-[#76b9ed]" : "h-[2px]"} />
  </button>
);

function Taskbar() {
  return (
    <footer className="flex h-10 shrink-0 items-center bg-[#1c2b36] font-['Open_Sans','Noto_Sans',sans-serif] text-white">
      <button aria-label="Start" className="flex h-10 w-12 items-center justify-center">
        <svg width="16" height="16" viewBox="0 0 16 16" fill="#fff"><path d="M0 2.200L6.500 1.300v6.300H0zM7.400 1.200L16 0v7.600H7.400zM0 8.500h6.500v6.200L0 13.800zM7.400 8.500H16V16l-8.600-1.200z" /></svg>
      </button>
      <label className="flex h-10 w-72 items-center border border-[#b5b5b5] bg-[#f2f2f2] pl-[11px] text-[#222]">
        <svg width="17" height="17" viewBox="0 0 17 17" fill="none" stroke="#222" strokeWidth="1.300"><circle cx="10.500" cy="6" r="5.300" /><path d="M6.500 10L.5 16.500" /></svg>
        <input
          type="text"
          aria-label="Search"
          placeholder="Type here to search"
          className="ml-[11px] w-[172px] bg-transparent text-[14px] outline-none placeholder:text-[#222]"
        />
        <svg width="72" height="38" viewBox="0 0 72 38" fill="none" className="shrink-0">
          <path d="M10 21L30 3q2 5-5 12L13 24zM21 28L18 7q5-1 6 7l1 13z" fill="#b9bdd0" stroke="#888ca0" strokeWidth=".6" />
          <ellipse cx="6" cy="22" rx="5" ry="3.500" stroke="#2d2a6a" strokeWidth="2.200" />
          <ellipse cx="18" cy="31" rx="3.500" ry="5" stroke="#2d2a6a" strokeWidth="2.200" />
          <path d="M10 21l7 5" stroke="#2d2a6a" strokeWidth="2.200" />
          <path d="M60 6l5 11 3 2-4 1 3 7 2 3-4-1 3 8H37l8-6-4-1 7-6-6-2z" fill="#b4c63f" />
          <path d="M60 10l-8 12 2 2-7 7 2 2-5 5h19l-6-8z" fill="#d3dd6c" />
          <path d="M60 8l5 10 1 1-2 1 3 8-3 0 3 8M58 11l-12 12 3 1-6 6 2 1-5 5" stroke="#a5362b" strokeWidth="1.200" strokeDasharray="3 2" />
          <path d="M27 37L37 13l1 2-9 20z" fill="#c9c9d8" stroke="#8b8ba0" strokeWidth=".7" />
          <path d="M37 15q-2-14 3-14 5 0 4 10c-2 10 4 15 10 12 5-3 6-7 7-10" stroke="#b4232c" strokeWidth="1.500" />
        </svg>
      </label>
      <button aria-label="Task view" className="flex h-10 w-[50px] items-center justify-center pr-[2px]">
        <svg width="16" height="16" viewBox="0 0 16 16" fill="none" stroke="#fff"><path d="M.5.500v2h10v-2M.5 5.500h10v5H.5zM.5 15.500v-2h10v2M14.500 0v4M14.500 10v6" /><path d="M13 6h3v2h-3z" fill="#fff" stroke="none" /></svg>
      </button>
      <TaskApp label="Edge" open>
        <svg width="26" height="26" viewBox="0 0 26 26">
          <circle cx="13" cy="12.500" r="12" fill="#0c6fc0" />
          <path d="M1 11Q3 1 13 .5q9 0 12 9 1 7-6 7-4 0-4-3 2-5-4-6Q5 6 1 11z" fill="#2ec3c8" />
          <path d="M14 .6Q24 2 25 11q0 5-6 5.500-4 0-4-2.500 6-4 4-9z" fill="#5bdc6b" />
          <path d="M8 15q1 8 9 9 5-1 7-5-8 3-12-2-2-4 0-7-4 1-4 5z" fill="#0a4f9c" />
          <path d="M1 17h12v8H1z" fill="#d97b17" /><path d="M1 17h12v3H1zM4 15h6v2H4z" fill="#a65510" /><path d="M6 19h2v2H6z" fill="#ffd36b" />
        </svg>
      </TaskApp>
      <TaskApp label="File Explorer">
        <svg width="23" height="20" viewBox="0 0 23 20"><path d="M0 1h8l2 2h12v4H0z" fill="#e09b10" /><path d="M0 5h22v13H0z" fill="#ffd765" /><path d="M4 19v-6q0-2 2-2h10q2 0 2 2v6h-4v-4H8v4z" fill="#3b97e0" /></svg>
      </TaskApp>
      <TaskApp label="Chrome" open>
        <svg width="24" height="24" viewBox="0 0 24 24"><circle cx="12" cy="12" r="12" fill="#fbc116" /><path d="M12 12L1.600 6A12 12 0 0 1 22.400 6H12z" fill="#e33b2e" /><path d="M12 12L1.600 6A12 12 0 0 0 12 24l5.200-9z" fill="#22a04b" /><path d="M12 6h10.400A12 12 0 0 1 12 24l5.200-9z" fill="#fbc116" /><circle cx="12" cy="12" r="6" fill="#fff" /><circle cx="12" cy="12" r="4.700" fill="#3a7cf0" /></svg>
      </TaskApp>
      <TaskApp label="Word" open>
        <svg width="23" height="22" viewBox="0 0 23 22"><path d="M11 3h11v16H11z" fill="#fff" /><path d="M13 6h7M13 8.500h7M13 11h7M13 13.500h7M13 16h7" stroke="#2b579a" /><path d="M0 2.500L14 0v22L0 19.500z" fill="#2b579a" /><path d="M3 7.500l1.700 7L7 8.500l2.200 6 1.800-7" stroke="#fff" strokeWidth="1.500" fill="none" /></svg>
      </TaskApp>
      <TaskApp label="Fusion" active><FusionLogo size={24} /></TaskApp>
      <span className="flex-1" />
      <button className="flex items-center text-[13px]">
        <svg width="24" height="24" viewBox="0 0 24 24" className="mr-[7px]"><path d="M1 14Q12 13 17 5l-3-1 8-3v9l-2-2Q13 17 1 17z" fill="#6cc516" /><path d="M1 20h3v3H1zM7 18h3v5H7zM12 16h3v7h-3zM18 11h4v12h-4z" fill="#55b010" /></svg>
        <span>FTSE 100</span>
        <span className="ml-[10px] text-[#13b713]">+0.30%</span>
      </button>
      <button aria-label="Show hidden icons" className="ml-[25px]"><svg width="13" height="8" viewBox="0 0 13 8" fill="none"><path d="M1 7l5.500-5.500L12 7" stroke="#fff" strokeWidth="1.400" /></svg></button>
      <button aria-label="OneDrive" className="ml-[9px]"><svg width="17" height="12" viewBox="0 0 17 12"><path d="M4 11Q0 10 .5 7 1 4 4 4 6 0 10 1q3 1 3.500 4 3 0 3 3t-3 3z" fill="#1487df" /><path d="M3 11l8-6q5 0 5.500 3.500 0 2.500-3 2.500z" fill="#35b4f5" /></svg></button>
      <button aria-label="Network" className="ml-[7px]"><svg width="17" height="14" viewBox="0 0 17 14" fill="none" stroke="#fff"><path d="M5 1.500h11v8H5.500M2.500 6v4h3M10.500 10v3M7 13.500h7" /><path d="M.5 1.500h4v4h-4z" /></svg></button>
      <button aria-label="Volume" className="ml-2"><svg width="17" height="14" viewBox="0 0 17 14" fill="none" stroke="#fff"><path d="M.5 5h2l3-3v10l-3-3h-2zM8 5q1.500 2 0 4M10.500 3q3 4 0 8M13 1.500q4.500 5.500 0 11" /></svg></button>
      <time className="ml-[7px] flex w-[62px] flex-col items-center text-[11px] leading-[18px]">
        <span>09:47</span>
        <span>09/12/2024</span>
      </time>
      <button aria-label="Notifications, 1 new" className="mr-[25px] ml-[15px] flex pt-[1px]">
        <svg width="26" height="26" viewBox="0 0 26 26" className="-mr-[9px]"><path d="M0 2h16v13H8l-4 4v-4H0z" fill="#fff" /><path d="M3 5.500h10M3 8.500h10M3 11.500h7" stroke="#1c2b36" /><circle cx="15.500" cy="17.500" r="7.500" fill="#333" stroke="#888" /><path d="M13.500 15l2.200-1.500V22" stroke="#fff" strokeWidth="1.500" fill="none" /></svg>
      </button>
    </footer>
  );
}

/* ---------- page ---------- */

export default function App() {
  return (
    <div className="flex h-screen flex-col overflow-hidden">
      <TitleBar />
      <div className="flex min-h-0 flex-1">
        <main className="flex min-w-0 flex-1 flex-col">
          <QuickBar />
          <Ribbon />
          <div className="relative flex min-h-0 flex-1 flex-col justify-between overflow-hidden pt-1 pb-1">
            <Scene />
            <ViewCube />
            <Browser />
            <div className="relative flex items-end justify-between">
              <section className="ml-1 flex h-[25px] w-[300px] items-center border border-t-0 border-[#c8c8c8] bg-[#f1f1f1] pt-[1px] pr-[10px] pl-6 font-['Roboto',sans-serif] text-[11px] text-[#5c5c5c]">
                <h2 className="flex-1">COMMENTS</h2>
                <button aria-label="Expand comments">
                  <svg width="10" height="10" viewBox="0 0 10 10"><circle cx="5" cy="5" r="5" fill="#222" /><path d="M2 5h6M5 2v6" stroke="#fff" strokeWidth="1.400" /></svg>
                </button>
              </section>
            </div>
            <div className="absolute inset-x-0 bottom-[6px] flex justify-center">
              <NavBar />
            </div>
          </div>
          <Timeline />
        </main>
        <LearningPanel />
      </div>
      <Taskbar />
    </div>
  );
}
